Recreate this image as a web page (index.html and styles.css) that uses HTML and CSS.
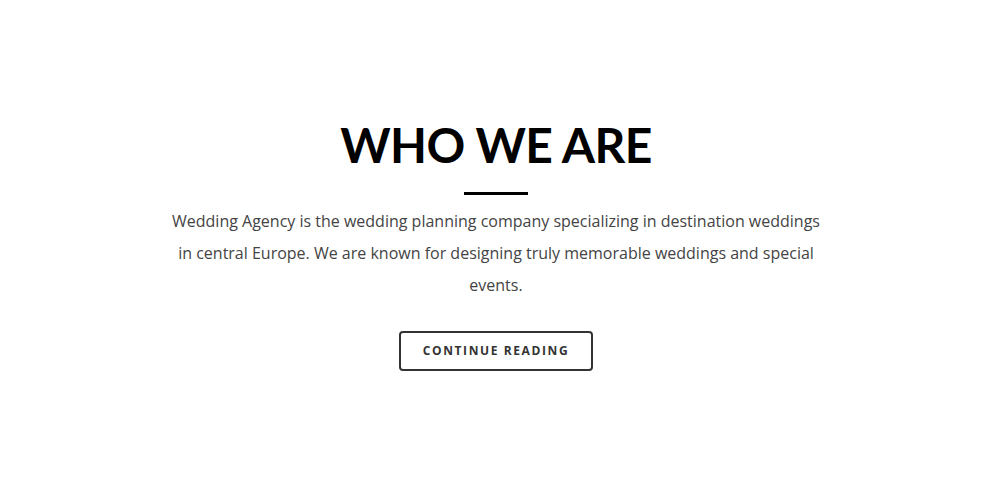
FILE: index.html
```html
<!DOCTYPE html>
<html>
<head>
<meta charset="utf-8">
<link rel="stylesheet" href="styles.css">
</head>
<body>
<section class="about">
  <h2 class="title">WHO WE ARE</h2>
  <div class="rule"></div>
  <p class="text">Wedding Agency is the wedding planning company specializing in destination weddings in central Europe. We are known for designing truly memorable weddings and special events.</p>
  <a class="btn" href="#">CONTINUE READING</a>
</section>
</body>
</html>
```
FILE: styles.css
```css
html, body {
  margin: 0;
  padding: 0;
  background: #fff;
}
.about {
  display: flex;
  flex-direction: column;
  align-items: center;
  padding-top: 117px;
}
.title {
  margin: 0;
  font-family: "Lato", "Liberation Sans", sans-serif;
  font-weight: 700;
  font-size: 48px;
  line-height: 55px;
  color: #000;
  letter-spacing: -0.6px;
}
.rule {
  width: 64px;
  height: 3px;
  background: #000;
  margin-top: 20px;
}
.text {
  margin: 10px 0 0;
  width: 660px;
  text-align: center;
  font-family: "Open Sans", sans-serif;
  font-size: 16px;
  line-height: 32px;
  color: #444;
}
.btn {
  margin-top: 30px;
  display: inline-block;
  border: 2px solid #333;
  border-radius: 4px;
  padding: 0 22px;
  height: 36px;
  line-height: 36px;
  font-family: "Open Sans", sans-serif;
  font-weight: 700;
  font-size: 12px;
  letter-spacing: 1.6px;
  color: #333;
  text-decoration: none;
}
```
